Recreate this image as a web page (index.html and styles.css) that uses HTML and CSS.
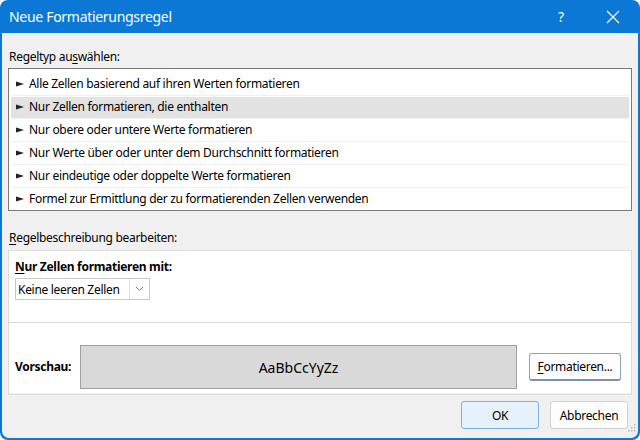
FILE: index.html
```html
<!DOCTYPE html>
<html lang="de">
<head>
    <meta charset="UTF-8">
    <title>Neue Formatierungsregel</title>
    <link rel="stylesheet" href="styles.css">
</head>
<body>
    <div class="window">
        <div class="titlebar">
            <span class="title">Neue Formatierungsregel</span>
            <span class="help">?</span>
            <span class="close">
                <svg width="14" height="14" viewBox="0 0 14 14"><path d="M1 1 L13 13 M13 1 L1 13" stroke="#fff" stroke-width="1.2" fill="none"/></svg>
            </span>
        </div>
        <div class="content">
            <div class="label first">Regeltyp au<u>s</u>wählen:</div>
            <ul class="rule-list">
                <li><svg class="arrow" width="8" height="6" viewBox="0 0 8 6"><path d="M0 0.5 L8 3 L0 5.5 Z" fill="#222"/></svg>Alle Zellen basierend auf ihren Werten formatieren</li>
                <li class="selected"><svg class="arrow" width="8" height="6" viewBox="0 0 8 6"><path d="M0 0.5 L8 3 L0 5.5 Z" fill="#222"/></svg>Nur Zellen formatieren, die enthalten</li>
                <li><svg class="arrow" width="8" height="6" viewBox="0 0 8 6"><path d="M0 0.5 L8 3 L0 5.5 Z" fill="#222"/></svg>Nur obere oder untere Werte formatieren</li>
                <li><svg class="arrow" width="8" height="6" viewBox="0 0 8 6"><path d="M0 0.5 L8 3 L0 5.5 Z" fill="#222"/></svg>Nur Werte über oder unter dem Durchschnitt formatieren</li>
                <li><svg class="arrow" width="8" height="6" viewBox="0 0 8 6"><path d="M0 0.5 L8 3 L0 5.5 Z" fill="#222"/></svg>Nur eindeutige oder doppelte Werte formatieren</li>
                <li><svg class="arrow" width="8" height="6" viewBox="0 0 8 6"><path d="M0 0.5 L8 3 L0 5.5 Z" fill="#222"/></svg>Formel zur Ermittlung der zu formatierenden Zellen verwenden</li>
            </ul>
            <div class="label second"><u>R</u>egelbeschreibung bearbeiten:</div>
            <div class="desc">
                <div class="desc-top">
                    <div class="bold"><u>N</u>ur Zellen formatieren mit:</div>
                    <div class="select">
                        <span class="select-text">Keine leeren Zellen</span>
                        <span class="select-btn">
                            <svg width="9" height="6" viewBox="0 0 9 6"><path d="M1 1 L4.5 4.5 L8 1" stroke="#777" stroke-width="1" fill="none"/></svg>
                        </span>
                    </div>
                </div>
                <div class="desc-bottom">
                    <span class="bold preview-label">Vorschau:</span>
                    <div class="preview">AaBbCcYyZz</div>
                    <button class="btn format-btn"><u>F</u>ormatieren...</button>
                </div>
            </div>
            <div class="actions">
                <button class="btn primary">OK</button>
                <button class="btn">Abbrechen</button>
            </div>
            <span class="grip">
                <svg width="8" height="8" viewBox="0 0 8 8" fill="#b5b5b5"><rect x="6" y="0" width="1.5" height="1.5"/><rect x="3" y="3" width="1.5" height="1.5"/><rect x="6" y="3" width="1.5" height="1.5"/><rect x="0" y="6" width="1.5" height="1.5"/><rect x="3" y="6" width="1.5" height="1.5"/><rect x="6" y="6" width="1.5" height="1.5"/></svg>
            </span>
        </div>
    </div>
</body>
</html>
```

FILE: styles.css
```css
/* Dialog layout */
body {
    margin: 0;
    background-color: #ffffff;
    font-family: "Noto Sans", "Open Sans", sans-serif;
    font-size: 12px;
    letter-spacing: -0.3px;
    color: #000;
}

.window {
    width: 640px;
    height: 440px;
    background-color: #0a78d4;
    border-radius: 8px;
    display: flex;
    flex-direction: column;
    box-sizing: border-box;
    padding: 0 2px 2px 2px;
}

.titlebar {
    height: 33px;
    display: flex;
    align-items: center;
    color: #fff;
    flex-shrink: 0;
}

.title {
    font-size: 14px;
    padding-left: 7px;
    flex: 1;
    padding-bottom: 1px;
}

.help {
    font-size: 14px;
    width: 20px;
    text-align: center;
    margin-right: 32px;
}

.close {
    width: 20px;
    margin-right: 15px;
    display: flex;
    justify-content: center;
}

.content {
    flex: 1;
    background-color: #f0f0f0;
    border-radius: 0 0 7px 7px;
    padding: 0 6px;
    display: flex;
    flex-direction: column;
    position: relative;
}

.label {
    line-height: 16px;
    padding-left: 1px;
}

.label.first {
    margin-top: 16px;
    margin-bottom: 3px;
}

.label.second {
    margin-top: 19px;
    margin-bottom: 4px;
}

u {
    text-decoration-thickness: 1px;
    text-underline-offset: 2px;
}

.rule-list {
    list-style: none;
    margin: 0;
    padding: 4px 2px 0 2px;
    height: 143px;
    overflow: hidden;
    box-sizing: border-box;
    background-color: #fff;
    border: 1px solid #7a7a7a;
    flex-shrink: 0;
}

.rule-list li {
    height: 23px;
    line-height: 22px;
    box-sizing: border-box;
    border-bottom: 1px solid #f0f0f0;
    padding-left: 5px;
    white-space: nowrap;
}

.rule-list li.selected {
    background-color: #e2e2e2;
    border-top: 1px solid #fff;
    line-height: 20px;
}

.arrow {
    margin-right: 5px;
    vertical-align: 1px;
}

.desc {
    background-color: #fff;
    border: 1px solid #dcdcdc;
    height: 145px;
    box-sizing: border-box;
    display: flex;
    flex-direction: column;
    flex-shrink: 0;
}

.desc-top {
    height: 72px;
    border-bottom: 1px solid #d9d9d9;
    padding: 8px 0 0 6px;
    box-sizing: border-box;
}

.bold {
    font-weight: bold;
    line-height: 16px;
}

.select {
    margin-top: 3px;
    width: 135px;
    height: 22px;
    border: 1px solid #c8c8c8;
    box-sizing: border-box;
    display: flex;
    align-items: center;
}

.select-text {
    flex: 1;
    padding-left: 2px;
}

.select-btn {
    width: 19px;
    height: 20px;
    border-left: 1px solid #e0e0e0;
    display: flex;
    align-items: center;
    justify-content: center;
}

.desc-bottom {
    flex: 1;
    display: flex;
    align-items: center;
    padding: 22px 10px 4px 6px;
    border-bottom: 1px solid #f0f0f0;
}

.preview-label {
    width: 65px;
}

.preview {
    width: 437px;
    height: 44px;
    box-sizing: border-box;
    background-color: #d9d9d9;
    border: 1px solid #a0a0a0;
    display: flex;
    align-items: center;
    justify-content: center;
    font-size: 14px;
    letter-spacing: 0;
}

.btn {
    font-family: inherit;
    font-size: 12px;
    letter-spacing: -0.3px;
    color: #000;
    background-color: #fdfdfd;
    border: 1px solid #d0d0d0;
    border-radius: 3px;
    height: 28px;
    width: 78px;
    padding: 0;
}

.format-btn {
    width: 92px;
    margin-left: auto;
    border-color: #8aa3c0;
    border-bottom: 2px solid #7a92b0;
}

.actions {
    display: flex;
    justify-content: flex-end;
    gap: 11px;
    margin-top: 6px;
    padding-right: 4px;
}

.btn.primary {
    background-color: #e5f1fb;
    border-color: #7fb2de;
}

.grip {
    position: absolute;
    right: 2px;
    bottom: 2px;
}
```
